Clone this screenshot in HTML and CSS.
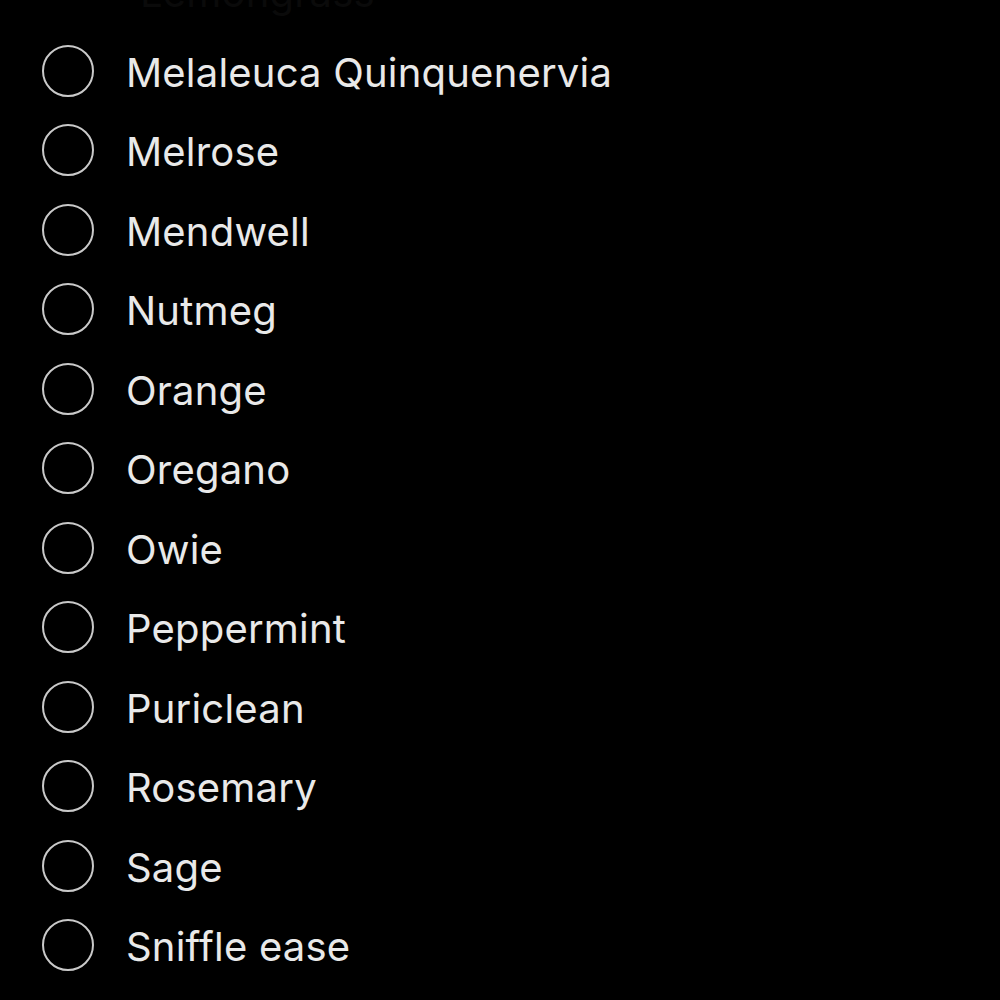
FILE: index.html
```html
<!DOCTYPE html>
<html lang="en">
  <head>
    <meta charset="UTF-8" />
    <meta name="viewport" content="width=device-width, initial-scale=1.0" />
    <title>Oils</title>
    <link rel="stylesheet" href="styles.css">
  </head>
  <body>
    <ul class="check-list">
      <li class="check-row faded"><span class="check-label">Lemongrass</span></li>
      <li class="check-row"><span class="check-circle"></span><span class="check-label">Melaleuca Quinquenervia</span></li>
      <li class="check-row"><span class="check-circle"></span><span class="check-label">Melrose</span></li>
      <li class="check-row"><span class="check-circle"></span><span class="check-label">Mendwell</span></li>
      <li class="check-row"><span class="check-circle"></span><span class="check-label">Nutmeg</span></li>
      <li class="check-row"><span class="check-circle"></span><span class="check-label">Orange</span></li>
      <li class="check-row"><span class="check-circle"></span><span class="check-label">Oregano</span></li>
      <li class="check-row"><span class="check-circle"></span><span class="check-label">Owie</span></li>
      <li class="check-row"><span class="check-circle"></span><span class="check-label">Peppermint</span></li>
      <li class="check-row"><span class="check-circle"></span><span class="check-label">Puriclean</span></li>
      <li class="check-row"><span class="check-circle"></span><span class="check-label">Rosemary</span></li>
      <li class="check-row"><span class="check-circle"></span><span class="check-label">Sage</span></li>
      <li class="check-row"><span class="check-circle"></span><span class="check-label">Sniffle ease</span></li>
    </ul>
  </body>
</html>
```
FILE: styles.css
```css
body {
  font-family: Inter, 'Noto Sans', sans-serif;
  margin: 0;
  padding: 0;
  background: #000;
  color: #e9e9e9;
  height: 100vh;
  overflow: hidden;
}

.check-list {
  list-style: none;
  margin: 0;
  padding: 0 0 0 42px;
  display: flex;
  flex-direction: column;
  margin-top: -47px;
}

.check-row {
  height: 79.5px;
  display: flex;
  align-items: center;
  gap: 32px;
}

/* previous row, scrolled almost out of view */
.check-row.faded {
  padding-left: 98px;
  color: #0a0a0a;
}

.check-circle {
  width: 52px;
  height: 52px;
  box-sizing: border-box;
  border: 2.5px solid #c9c9c9;
  border-radius: 50%;
  flex-shrink: 0;
  margin-top: -3px;
}

.check-label {
  font-size: 40px;
  letter-spacing: 0.2px;
  font-variant-ligatures: none;
}
```
